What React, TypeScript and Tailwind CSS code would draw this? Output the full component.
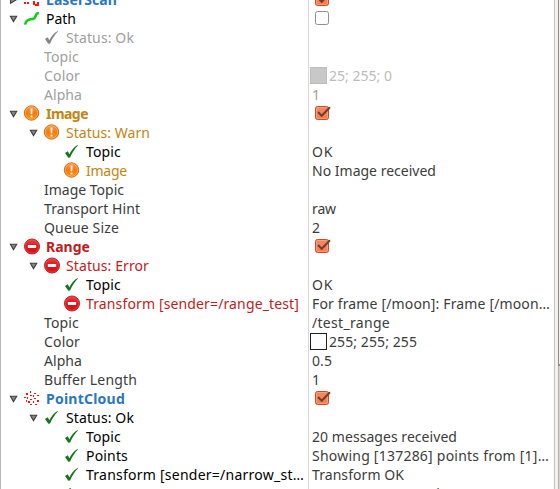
import { useLayoutEffect, useRef, type ReactNode } from "react";

type Icon = "check" | "checkGray" | "warn" | "error" | "cloud" | "path" | "laser";
type Row = {
  level: 0 | 1 | 2 | 3;
  label: string;
  width: number;
  color: string;
  bold?: boolean;
  icon?: Icon;
  arrow?: "open" | "closed";
  value?: string;
  valueWidth?: number;
  valueColor?: string;
  swatch?: string;
  checked?: boolean;
};

const rows: Row[] = [
  { level: 0, label: "LaserScan", width: 71, color: "text-[#2a76c6]", bold: true, icon: "laser", arrow: "closed", checked: true },
  { level: 0, label: "Path", width: 30, color: "text-black", icon: "path", arrow: "open", checked: false },
  { level: 1, label: "Status: Ok", width: 68, color: "text-[#a0a0a0]", icon: "checkGray" },
  { level: 3, label: "Topic", width: 35, color: "text-[#a0a0a0]" },
  { level: 3, label: "Color", width: 36, color: "text-[#a0a0a0]", value: "25; 255; 0", valueWidth: 63, valueColor: "text-[#bcbcbc]", swatch: "bg-[#c8c8c8] border-[#bcbcbc]" },
  { level: 3, label: "Alpha", width: 38, color: "text-[#a0a0a0]", value: "1", valueWidth: 8, valueColor: "text-[#a0a0a0]" },
  { level: 0, label: "Image", width: 42, color: "text-[#c48411]", bold: true, icon: "warn", arrow: "open", checked: true },
  { level: 1, label: "Status: Warn", width: 84, color: "text-[#c48411]", icon: "warn", arrow: "open" },
  { level: 2, label: "Topic", width: 35, color: "text-black", icon: "check", value: "OK", valueWidth: 21 },
  { level: 2, label: "Image", width: 41, color: "text-[#c48411]", icon: "warn", value: "No Image received", valueWidth: 124 },
  { level: 3, label: "Image Topic", width: 80, color: "text-[#3c3c3c]" },
  { level: 3, label: "Transport Hint", width: 96, color: "text-[#3c3c3c]", value: "raw", valueWidth: 24 },
  { level: 3, label: "Queue Size", width: 75, color: "text-[#3c3c3c]", value: "2", valueWidth: 8 },
  { level: 0, label: "Range", width: 44, color: "text-[#c01c20]", bold: true, icon: "error", arrow: "open", checked: true },
  { level: 1, label: "Status: Error", width: 83, color: "text-[#c01c20]", icon: "error", arrow: "open" },
  { level: 2, label: "Topic", width: 35, color: "text-black", icon: "check", value: "OK", valueWidth: 21 },
  { level: 2, label: "Transform [sender=/range_test]", width: 213, color: "text-[#c01c20]", icon: "error", value: "For frame [/moon]: Frame [/moon…", valueWidth: 238 },
  { level: 3, label: "Topic", width: 35, color: "text-[#3c3c3c]", value: "/test_range", valueWidth: 78 },
  { level: 3, label: "Color", width: 36, color: "text-[#3c3c3c]", value: "255; 255; 255", valueWidth: 88, swatch: "bg-white border-[#202020]" },
  { level: 3, label: "Alpha", width: 38, color: "text-[#3c3c3c]", value: "0.5", valueWidth: 20 },
  { level: 3, label: "Buffer Length", width: 93, color: "text-[#3c3c3c]", value: "1", valueWidth: 8 },
  { level: 0, label: "PointCloud", width: 79, color: "text-[#2a76c6]", bold: true, icon: "cloud", arrow: "open", checked: true },
  { level: 1, label: "Status: Ok", width: 68, color: "text-black", icon: "check", arrow: "open" },
  { level: 2, label: "Topic", width: 35, color: "text-black", icon: "check", value: "20 messages received", valueWidth: 145 },
  { level: 2, label: "Points", width: 42, color: "text-black", icon: "check", value: "Showing [137286] points from [1]…", valueWidth: 237 },
  { level: 2, label: "Transform [sender=/narrow_st…", width: 218, color: "text-black", icon: "check", value: "Transform OK", valueWidth: 92 },
  { level: 3, label: "Topic", width: 35, color: "text-[#3c3c3c]", value: "/narrow_stereo/points2", valueWidth: 157 },
];

function Fitted({ width, className, children }: { width: number; className: string; children: ReactNode }) {
  const ref = useRef<HTMLSpanElement>(null);
  useLayoutEffect(() => {
    const el = ref.current;
    if (!el) return;
    el.style.letterSpacing = "0px";
    const count = Array.from(el.textContent ?? "").length;
    const natural = el.getBoundingClientRect().width;
    if (count > 1) el.style.letterSpacing = `${(width - natural) / count}px`;
  }, [width]);
  return <span ref={ref} className={`shrink-0 whitespace-pre ${className}`}>{children}</span>;
}

function Glyph({ icon }: { icon: Icon }) {
  const base = "ml-px block size-4 shrink-0 overflow-visible";
  if (icon === "check" || icon === "checkGray")
    return (
      <svg viewBox="0 0 16 16" className={base}>
        <path d="M1 8.9 3.7 7.3 5.4 10.3C7.2 6.6 9.8 3.2 13.6 1L14 1.5C10.6 4.8 8.2 8.8 6.1 13.5L4.3 13.8Z" fill={icon === "check" ? "#16761b" : "#858585"} />
      </svg>
    );
  if (icon === "warn")
    return (
      <svg viewBox="0 0 16 16" className={base}>
        <defs>
          <linearGradient id="warnFill" x1="0" y1="0" x2="0" y2="1">
            <stop stopColor="#f7a052" />
            <stop offset="0.5" stopColor="#f47a10" />
            <stop offset="1" stopColor="#ff970c" />
          </linearGradient>
        </defs>
        <circle cx="7.5" cy="7" r="7.2" fill="url(#warnFill)" stroke="#c95c16" strokeWidth="0.9" />
        <circle cx="7.5" cy="7" r="6.2" fill="none" stroke="#ffb35c" strokeWidth="0.7" />
        <path d="M6.5 2.5h2l-.2 5.8H6.7Z" fill="#fff2df" />
        <rect x="6.5" y="9.5" width="2" height="2" rx=".5" fill="#fff2df" />
      </svg>
    );
  if (icon === "error")
    return (
      <svg viewBox="0 0 16 16" className={base}>
        <defs>
          <linearGradient id="errorFill" x1="0" y1="0" x2="0" y2="1">
            <stop stopColor="#ed4545" />
            <stop offset="0.5" stopColor="#df1018" />
            <stop offset="1" stopColor="#e60c10" />
          </linearGradient>
        </defs>
        <circle cx="8" cy="7.5" r="7.5" fill="url(#errorFill)" stroke="#b20d12" strokeWidth="0.9" />
        <circle cx="8" cy="7.5" r="6.6" fill="none" stroke="#f26565" strokeWidth="0.5" />
        <rect x="3.8" y="6" width="8.4" height="3" rx="0.5" fill="#fff" />
      </svg>
    );
  if (icon === "path")
    return (
      <svg viewBox="0 0 16 16" className={base}>
        <path d="M1.2 13.6C1.8 9.6 4 8.6 6.5 8.3C10.5 8 11 7 11.8 4.5C12.3 3 13 2.2 14.9 2" fill="none" stroke="#10cf16" strokeWidth="2.6" />
      </svg>
    );
  if (icon === "laser")
    return (
      <svg viewBox="0 0 16 16" className={base} fill="#f11" shapeRendering="crispEdges">
        <path d="M0 10h2v2H0zM3 10h2v2H3zM9 9h2v4H9zM11 12h2v2h-2zM13 10h2v4h-2z" />
      </svg>
    );
  return (
    <svg viewBox="0 0 16 16" className={base} fill="#f21318" shapeRendering="crispEdges">
      <path d="M6 0h1v2H6zM2 2h2v2H2zM10 2h2v1h-2zM6 4h2v1H6zM9 4h1v2H9zM13 4h2v1h-2zM0 6h2v1H0zM3 6h1v2H3zM10 7h2v1h-2zM6 8h2v1H6zM2 9h1v2H2zM13 9h2v2h-2zM4 10h2v2H4zM9 10h1v2H9zM6 13h2v1H6zM11 13h2v1h-2z" />
    </svg>
  );
}

function Arrow({ kind }: { kind?: "open" | "closed" }) {
  return (
    <svg viewBox="0 0 14 16" className="block h-4 w-3.5 shrink-0">
      {kind === "open" && <path d="M1.4 5.2h6.3L4.5 10.6Z" fill="#888" stroke="#3e3e3e" strokeWidth="1.1" />}
      {kind === "closed" && <path d="M1.5 4.5v6.8L7 8Z" fill="#888" stroke="#3e3e3e" strokeWidth="1.1" />}
    </svg>
  );
}

function Box({ checked }: { checked: boolean }) {
  return (
    <svg viewBox="0 0 18 18" className="ml-1.5 -mt-px block size-[18px] shrink-0">
      <defs>
        <linearGradient id="boxFill" x1="0" y1="0" x2="0" y2="1">
          <stop stopColor="#f58a64" />
          <stop offset="1" stopColor="#f87b50" />
        </linearGradient>
      </defs>
      <rect x="0.5" y="2.5" width="13" height="13" rx="2" fill={checked ? "url(#boxFill)" : "#fff"} stroke={checked ? "#c64e27" : "#8f8f8f"} />
      {checked && <rect x="1.5" y="3.5" width="11" height="11" rx="1" fill="none" stroke="#ffa27e" strokeOpacity=".8" />}
      {checked && <path d="M3 8 6.7 11.8 15 3.2" fill="none" stroke="#70402a" strokeWidth="2" />}
    </svg>
  );
}

const labelPadding = ["pl-[9px]", "pl-[29px]", "pl-[49px]", "pl-11"];

export default function App() {
  return (
    <div className="flex h-[489px] w-[560px] overflow-hidden bg-white font-['Noto_Sans','Open_Sans',sans-serif] text-sm leading-[19px]">
      <div className="w-px shrink-0 bg-[#bdb7b2]" />
      <div className="-mt-2.5 flex w-[307px] shrink-0 flex-col">
        {rows.map((row, i) => (
          <div key={i} className={`-ml-px flex h-[19px] shrink-0 items-center ${labelPadding[row.level]}`}>
            {row.level !== 3 && <Arrow kind={row.arrow} />}
            {row.icon && <Glyph icon={row.icon} />}
            <Fitted width={row.width} className={`${row.color} ${row.bold ? "font-bold" : ""} ${row.icon ? "ml-1.5" : ""}`}>
              {row.label}
            </Fitted>
          </div>
        ))}
      </div>
      <div className="w-px shrink-0 bg-[#d8d8d8]" />
      <div className="-mt-2.5 flex w-[245px] shrink-0 flex-col">
        {rows.map((row, i) => (
          <div key={i} className="flex h-[19px] shrink-0 items-center">
            {row.checked !== undefined && <Box checked={row.checked} />}
            {row.swatch && <div className={`ml-px size-[17px] shrink-0 border ${row.swatch}`} />}
            {row.value && (
              <Fitted width={row.valueWidth ?? 0} className={`${row.valueColor ?? "text-[#3c3c3c]"} ${row.swatch ? "ml-0.5" : "ml-[3px]"}`}>
                {row.value}
              </Fitted>
            )}
          </div>
        ))}
      </div>
      <div className="w-px shrink-0 bg-[#c5c0bb]" />
      <div className="w-[3px] shrink-0 bg-[#f2f1f0]" />
      <div className="flex flex-1 flex-col">
        <div className="h-[364px] border-l border-[#8f8b88] bg-[#f2f1f0]" />
        <div className="h-0.5 bg-[#8f8b88]" />
        <div className="flex-1 border-l border-[#b5afa9] bg-[#d8d4cf]" />
      </div>
    </div>
  );
}
